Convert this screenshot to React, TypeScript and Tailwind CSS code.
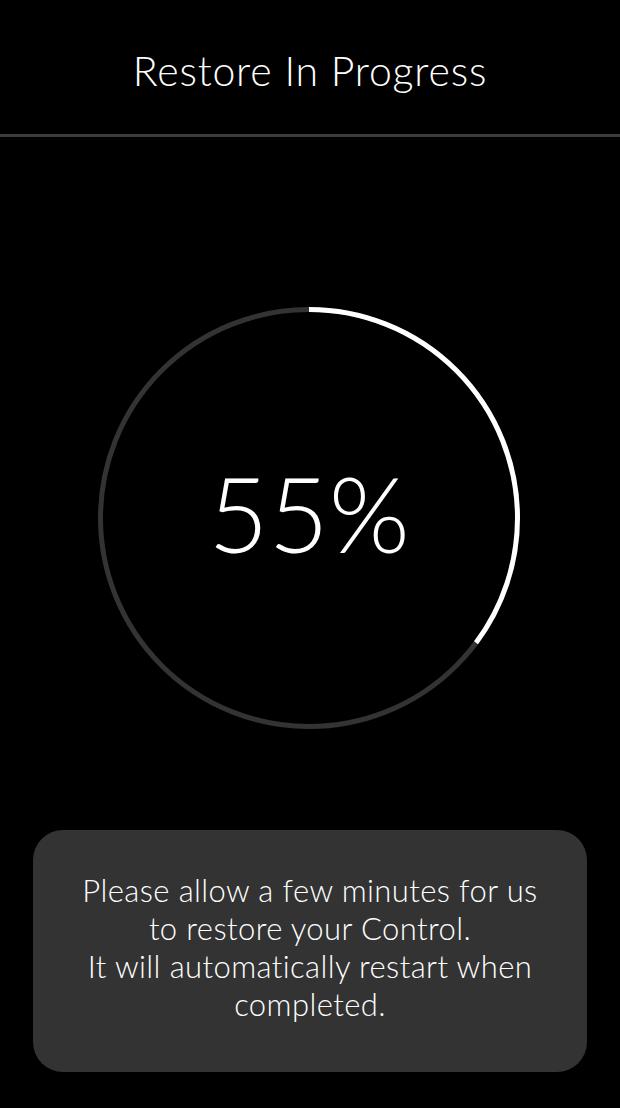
import React from "react";

export default function App() {
  const r = 208.5;
  const c = 2 * Math.PI * r;
  const progress = 0.352;
  return (
    <div
      className="w-[620px] h-[1108px] bg-black text-white flex flex-col overflow-hidden"
      style={{ fontFamily: "Lato, 'Open Sans', sans-serif" }}
    >
      <header className="h-[137px] shrink-0 pt-[7px] flex items-center justify-center border-b-[3px] border-[#3c3c3c]">
        <h1 className="text-[41px] font-light tracking-[0.8px] leading-none">
          Restore In Progress
        </h1>
      </header>

      <div className="mt-[170px] mx-auto w-[422px] h-[422px] relative shrink-0 -translate-x-[1px]">
        <svg width="422" height="422" viewBox="0 0 422 422" className="block">
          <circle cx="211" cy="211" r={r} fill="none" stroke="#333333" strokeWidth="5" />
          <circle
            cx="211"
            cy="211"
            r={r}
            fill="none"
            stroke="#ffffff"
            strokeWidth="5"
            strokeDasharray={`${c * progress} ${c}`}
            transform="rotate(-90 211 211)"
          />
        </svg>
        <div className="absolute inset-0 pb-[10px] flex items-center justify-center">
          <span className="text-[104px] font-light leading-none">55%</span>
        </div>
      </div>

      <div className="mt-[101px] mx-[33px] h-[242px] pb-[8px] rounded-[30px] bg-[#333333] flex flex-col items-center justify-center text-center text-[31px] font-light tracking-[0.4px] leading-[38px]">
        <p>Please allow a few minutes for us</p>
        <p>to restore your Control.</p>
        <p>It will automatically restart when</p>
        <p>completed.</p>
      </div>
    </div>
  );
}
